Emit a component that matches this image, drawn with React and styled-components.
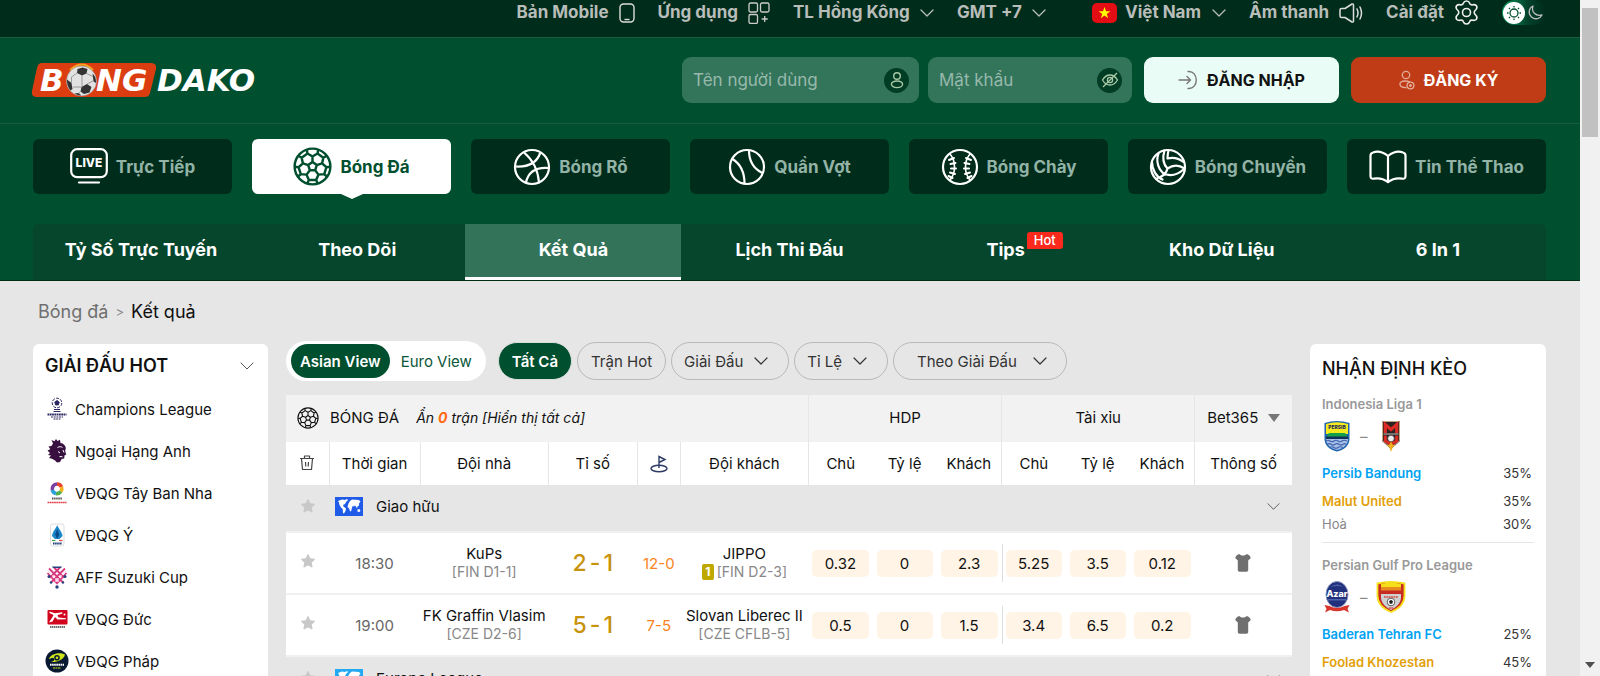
import React from 'react';
import styled, { createGlobalStyle, css } from 'styled-components';

const leagues = [
	{ name: 'Champions League', logo: 'ucl' },
	{ name: 'Ngoại Hạng Anh', logo: 'epl' },
	{ name: 'VĐQG Tây Ban Nha', logo: 'laliga' },
	{ name: 'VĐQG Ý', logo: 'seriea' },
	{ name: 'AFF Suzuki Cup', logo: 'aff' },
	{ name: 'VĐQG Đức', logo: 'bundesliga' },
	{ name: 'VĐQG Pháp', logo: 'ligue1' },
];

const sports = [
	{ name: 'Trực Tiếp', icon: 'live' },
	{ name: 'Bóng Đá', icon: 'football' },
	{ name: 'Bóng Rổ', icon: 'basketball' },
	{ name: 'Quần Vợt', icon: 'tennis' },
	{ name: 'Bóng Chày', icon: 'baseball' },
	{ name: 'Bóng Chuyền', icon: 'volleyball' },
	{ name: 'Tin Thể Thao', icon: 'book' },
];

const menus = ['Tỷ Số Trực Tuyến', 'Theo Dõi', 'Kết Quả', 'Lịch Thi Đấu', 'Tips', 'Kho Dữ Liệu', '6 In 1'];

const matches = [
	{
		time: '18:30',
		home: 'KuPs',
		homeRank: '[FIN D1-1]',
		score: [2, 1],
		corner: '12-0',
		away: 'JIPPO',
		awayRank: '[FIN D2-3]',
		awayCard: 1,
		odds: ['0.32', '0', '2.3', '5.25', '3.5', '0.12'],
	},
	{
		time: '19:00',
		home: 'FK Graffin Vlasim',
		homeRank: '[CZE D2-6]',
		score: [5, 1],
		corner: '7-5',
		away: 'Slovan Liberec II',
		awayRank: '[CZE CFLB-5]',
		odds: ['0.5', '0', '1.5', '3.4', '6.5', '0.2'],
	},
];

const predictions = [
	{
		league: 'Indonesia Liga 1',
		home: 'Persib Bandung',
		away: 'Malut United',
		logos: ['persib', 'malut'],
		rates: ['35%', '35%', '30%'],
	},
	{
		league: 'Persian Gulf Pro League',
		home: 'Baderan Tehran FC',
		away: 'Foolad Khozestan',
		logos: ['azar', 'foolad'],
		rates: ['25%', '45%', '30%'],
	},
];

/* seams of a football: centre pentagon, spokes and the outer pentagons */
const point = (r, deg) => {
	const a = (deg * Math.PI) / 180;
	return `${(12 + r * Math.cos(a)).toFixed(2)} ${(12 + r * Math.sin(a)).toFixed(2)}`;
};
const angles = [-90, -18, 54, 126, 198];
const seams =
	`M${angles.map(a => point(2.8, a)).join('L')}Z` +
	angles
		.map(
			a =>
				`M${point(2.8, a)}L${point(6.2, a)}` +
				`M${point(11, a - 19)}L${point(8.6, a - 21)}L${point(6.2, a)}L${point(8.6, a + 21)}L${point(11, a + 19)}` +
				`M${point(8.6, a + 21)}L${point(8.6, a + 51)}`,
		)
		.join('');

const Football = ({ size, width = 1.4 }) => (
	<svg width={size} height={size} viewBox="0 0 24 24" fill="none" stroke="currentColor" strokeWidth={width} strokeLinejoin="round">
		<circle cx="12" cy="12" r="11" />
		<path d={seams} />
	</svg>
);

const Chevron = ({ size = 14, width = 1.4 }) => (
	<svg width={size} height={size} viewBox="0 0 14 14" fill="none" stroke="currentColor" strokeWidth={width} strokeLinecap="round" strokeLinejoin="round">
		<path d="M1 4l6 6 6-6" />
	</svg>
);

const Star = () => (
	<svg width="16" height="16" viewBox="0 0 16 16" fill="#c8c8c8" stroke="#c8c8c8" strokeLinejoin="round">
		<path d="M8 1.500l2 4.200 4.600.6-3.400 3.200.9 4.600L8 11.900l-4.100 2.200.9-4.600L1.400 6.300 6 5.700z" />
	</svg>
);

const Shirt = () => (
	<svg width="16" height="20" viewBox="0 0 16 20" fill="#6f6f6f">
		<path d="M4.500 1C6 3 10 3 11.500 1c2 .3 3.700 1.800 4.300 4l-2.600 2.600V17c0 1-.8 1.700-1.700 1.700h-7c-1 0-1.700-.7-1.700-1.700V7.600L.2 5C.8 2.800 2.500 1.300 4.500 1z" />
	</svg>
);

const WorldFlag = ({ color }) => (
	<svg width="28" height="19" viewBox="0 0 28 19">
		<path fill={color} d="M0 0h28v19H0z" />
		<path
			fill="#fff"
			d="M3 4l4-1.500 3 .5 2-1 1 1-2 2-1 2-2 1 .5 1.500 2.500 2-.5 2.500-1.500 2.500-1-.5-.3-4L6 10.500 4.500 8 4 5.500zM13.500 6.500L15 4l2-1.500L24 3l1.500 1.500-1.500 2v2l-1.500 1-.5 2-1-2-1.500-1-.5 1.500-1-1.500-1 2-.8 3.500-1.200.5-.8-3-1.700-1.500zM22.500 12.500l2-.5 1 2-1.500 1.300-1.700-1z"
		/>
	</svg>
);

function SportIcon({ name }) {
	if (name === 'football') return <Football size={39} width={1.5} />;
	return (
		<svg width="38" height="38" viewBox="0 0 38 38" fill="none" stroke="#fff" strokeWidth="2.200" strokeLinejoin="round" strokeLinecap="round">
			{name === 'live' && (
				<>
					<rect x="1.200" y="1.200" width="35.600" height="28" rx="6" />
					<path d="M9 34.500h20" />
					<text x="19" y="19" textAnchor="middle" fill="#fff" stroke="none" fontSize="12" fontWeight="800">
						LIVE
					</text>
				</>
			)}
			{name === 'basketball' && (
				<>
					<circle cx="19" cy="19" r="17" />
					<path d="M11 4.500C20 12 25 22 26 34.500M3 18.500c10 .5 20-2 24-13M13 34.500C15 25 22 19 35.500 20" />
				</>
			)}
			{name === 'tennis' && (
				<>
					<circle cx="19" cy="19" r="17" />
					<path d="M21 2.500c0 9 3 17 12.500 22M4.500 11c8 5 12 14 12 24.500" />
				</>
			)}
			{name === 'baseball' && (
				<>
					<circle cx="19" cy="19" r="17" />
					<path d="M9 6c6 7 6 19 0 26M29 6c-6 7-6 19 0 26" strokeWidth="1.600" />
					<path d="M8 12l5-2M9.500 16l5-1M10 20.500h5M9 24.500l5 1.500M7.500 28l4 2M30 12l-5-2M28.500 16l-5-1M28 20.500h-5M29 24.500l-5 1.500M30.500 28l-4 2" strokeWidth="2" />
				</>
			)}
			{name === 'volleyball' && (
				<>
					<circle cx="19" cy="19" r="17" />
					<path d="M18.500 20.500C14 16 13.500 9 15.500 2.500M9.500 5.500c-3 8 0 16.500 6.500 21M3 14c0 8 4.500 15 10.500 17.500M18.500 20.500c6-4 11.500-3.500 17 0M18.500 10.500c6-1.500 11.500 0 16 3.500M18.500 20.500c-1 5-5.500 8.500-11.500 10M17.500 26.500c6 1.500 12.500-1 17-5M18.500 10.500c0-3 .3-5.500 1-8" />
				</>
			)}
			{name === 'book' && (
				<path d="M19 8C14 4 8 3 4 4.500c-1.500.5-2.500 1-2.500 3V28c0 2 1 3 3 2.700 5-1 10 0 14.500 3.300 4.500-3.300 9.500-4.300 14.500-3.300 2 .3 3-.7 3-2.700V7.500c0-2-1-2.500-2.500-3C30 3 24 4 19 8zM19 8v26" />
			)}
		</svg>
	);
}

function LeagueLogo({ name }) {
	return (
		<svg width="24" height="24" viewBox="0 0 24 24">
			{name === 'ucl' && (
				<g fill="none" stroke="#2a2760">
					<circle cx="12" cy="6" r="4.800" strokeDasharray="3 1.200" />
					<path d="M12 3.500l2.200 1.700-.8 2.700h-2.800l-.8-2.700z" fill="#2a2760" />
					<path d="M9 12.500h6M8.500 14.500h7" />
					<path d="M2.500 17.500h19" strokeWidth="2" strokeDasharray="1.800 .5" />
					<path d="M6 20h12M8.500 22h7" strokeDasharray="2 .7" />
				</g>
			)}
			{name === 'epl' && (
				<>
					<path
						fill="#38103f"
						d="M8 4.500L6.500 1l3 1.200L11 0l1.500 2L15 .8 15.500 4c3 .3 5 2.500 5.300 5l-.6 3 1 3.500-1.700 1-.3 3-2.500.5-1.700 3-3 .5c-2-2.500-5-4-8-4.500L6 16.500 3 16l2-2-2.500-2.500 2.800-1.200L3.500 7.500l3-.5z"
					/>
					<path fill="none" stroke="#fff" strokeWidth="1" d="M12.500 8.500c2-1.200 3.500-1 5 0M13 12.500l2 1.500M18 11l1 2.500M14.500 17.500l3 .3" />
				</>
			)}
			{name === 'laliga' && (
				<>
					<g fill="none" strokeWidth="3.600">
						<path stroke="#e8442c" d="M12 3a5 5 0 0 1 4.500 3" />
						<path stroke="#f6b21a" d="M16.600 6a5 5 0 0 1-.8 4.500" />
						<path stroke="#4cae4c" d="M15.800 10.500A5 5 0 0 1 11 12.600" />
						<path stroke="#2c9fdc" d="M11 12.600A5 5 0 0 1 7.300 9" />
						<path stroke="#7b3fa0" d="M7.300 9A5 5 0 0 1 12 3" />
					</g>
					<path stroke="#555" strokeWidth="2" strokeDasharray="1.500 .6" d="M7 17.500h10" />
					<path stroke="#e1454a" strokeWidth="1.600" strokeDasharray="1.800 .4" d="M2.500 21.500h19" />
				</>
			)}
			{name === 'seriea' && (
				<>
					<rect x="5.500" y="1" width="13.500" height="22" rx="2.500" fill="#fff" stroke="#ddd" />
					<path fill="#1d87c9" d="M12.200 2c1 3 5.300 7.500 5.300 11L14.500 16h-4.600L7 13c0-3.500 4.200-8 5.200-11z" />
					<path fill="#0b4a87" d="M12.200 6l2 5.500-2 4.500-2-4.500z" />
					<path stroke="#3aa14f" strokeWidth="1.200" d="M7 17.500h3.500" />
					<path stroke="#d94343" strokeWidth="1.200" d="M14 17.500h3.500" />
					<path stroke="#1c3e7a" strokeWidth="2" strokeDasharray="1.600 .5" d="M8 20.500h9" />
				</>
			)}
			{name === 'aff' && (
				<>
					<path fill="none" stroke="#d8387f" strokeWidth="1.800" d="M4 3.500l14 14M20 3.500l-14 14M9 2.500l10 10M15 2.500l-10 10M2.500 8l10 11M21.500 8l-10 11" />
					<path fill="none" stroke="#f9cfe0" strokeWidth=".7" d="M3 6l12 12M21 6L9 18" />
					<g fill="#28417e">
						<circle cx="4" cy="11.500" r="1.500" />
						<circle cx="20" cy="11.500" r="1.500" />
						<path d="M7 1.500h10l-1 1.500H8z" />
						<circle cx="12" cy="22" r="1.700" />
						<circle cx="6" cy="17.500" r="1.200" />
						<circle cx="18" cy="17.500" r="1.200" />
					</g>
				</>
			)}
			{name === 'bundesliga' && (
				<>
					<rect x="2.500" y="3" width="20" height="14.500" rx="1" fill="#d2051e" />
					<path fill="#fff" d="M4.500 4.500l5.500 1.700 7.500-1-.3 1.500-4.700 1.300 1 2.500 7.500.8v1l-8.500.2L10 10l-2.500 4.500-3.500 1 3.500-5.500 1-2-4-2z" />
					<circle cx="19.500" cy="7.500" r="1" fill="#fff" />
					<path stroke="#444" strokeWidth="1.500" strokeDasharray="1.500 .5" d="M5 20h15" />
				</>
			)}
			{name === 'ligue1' && (
				<>
					<circle cx="12" cy="12" r="11.500" fill="#0a1932" />
					<path fill="#cde31b" d="M4 10c1-5 10-7.500 16-4.500-1 5-8 8-14 7.500 3-1 4-2 3-3.500-1-1-3 0-5 .5z" />
					<circle cx="12" cy="8.800" r="2.800" fill="#0a1932" />
					<circle cx="12" cy="8.800" r="1.300" fill="#cde31b" />
					<path stroke="#fff" strokeWidth="2" strokeDasharray="1.600 .5" d="M5 15.700h14" />
					<path stroke="#cde31b" strokeWidth="1.200" strokeDasharray="2 .5" d="M8 19h8" />
				</>
			)}
		</svg>
	);
}

function TeamLogo({ name }) {
	return (
		<svg width="30" height="32" viewBox="0 0 30 32">
			{name === 'persib' && (
				<>
					<path fill="#1f63ae" d="M2.500 3Q15-1 27.500 3v16c0 6-5 11-12.500 12.500C7.500 30 2.500 25 2.500 19z" />
					<path fill="#f4ea1d" d="M4 4q11-3.500 22 0v10H4z" />
					<path fill="#17a04a" d="M4 17l3-4h16l3 4z" />
					<path fill="#12305c" d="M4 16.500h22v2.500H4z" />
					<path fill="#a9bfe6" d="M4 19h22c0 5-4 9.500-11 11C8 28.500 4 24 4 19z" />
					<path fill="none" stroke="#3f63b0" strokeWidth="1.200" d="M4 21q2-1.500 4 0t4 0 4 0 4 0 5 0M5 24.300q2-1.500 4 0t4 0 4 0 4 0 3 0M8 27.500q2-1.500 4 0t4 0 5 0" />
					<text x="15" y="8.500" textAnchor="middle" fontSize="5" fontWeight="800" fill="#1b2a5e">
						PERSIB
					</text>
				</>
			)}
			{name === 'malut' && (
				<>
					<path fill="#2a2220" d="M6 1h18v20l-9 8-9-8z" />
					<path fill="none" stroke="#e9c9a0" strokeWidth=".8" d="M6.500 1.500h17v19L15 28l-8.500-7.500z" />
					<path fill="none" stroke="#dc2a25" strokeWidth="3.200" d="M9.300 13V4.500l5.700 5 5.700-5V13" />
					<path fill="none" stroke="#eee" strokeWidth=".8" d="M7.500 14h15" />
					<path fill="none" stroke="#dc2a25" strokeWidth="3" d="M9.300 15.500v5.500L15 24l5.700-3v-5.500" />
					<circle cx="15" cy="18.500" r="3.300" fill="#eee" stroke="#333" strokeWidth=".7" />
					<path fill="#f0b020" d="M15 21l1.300 3.500 3.200.5-2.700 2-1.800 5-1.800-5-2.700-2 3.200-.5z" />
				</>
			)}
			{name === 'azar' && (
				<>
					<ellipse cx="15" cy="13.500" rx="11" ry="13" fill="#20307c" stroke="#8b94bd" />
					<path fill="#4e62ab" d="M8 6q7-5 14 0-7-2-14 0zM6 18h18v1.500H6z" />
					<path fill="#d8352c" d="M2.500 24l5 1q7.500 4 15 0l5-1-2 4 1.500 3.500L22 29q-7 2.500-14 0l-5 2.500L4.500 28z" />
					<text x="15" y="15.500" textAnchor="middle" fontSize="9" fontWeight="800" fill="#fff">
						Azar
					</text>
				</>
			)}
			{name === 'foolad' && (
				<>
					<path fill="#c62a22" stroke="#f5df1b" strokeWidth="1.800" d="M1.500 2.500Q15-.5 28.500 2.500v12c0 8-5 13-13.500 16.500C6.500 27.500 1.500 22.500 1.500 14.500z" />
					<path fill="#f5df1b" d="M5 3Q15 .5 25 3v4H5z" />
					<path fill="#e98a20" d="M5 6h20v3.500H5z" />
					<path fill="#cfd0d2" d="M5 13h20v3c0 6-4.500 10-10 13-5.500-3-10-7-10-13z" />
					<path stroke="#d8453c" strokeWidth="1.500" strokeDasharray="1.800 .6" d="M8 16h14M13 27h4" />
					<circle cx="15" cy="21" r="3.800" fill="#fff" stroke="#222" strokeWidth=".7" />
					<path fill="#222" d="M15 18.800l2 1.500-.8 2.400h-2.400l-.8-2.400z" />
				</>
			)}
		</svg>
	);
}

const Logo = () => (
	<LogoSvg width="224" height="36" viewBox="0 0 224 36" role="img" aria-label="BongDaKo">
		<path fill="#dc3d10" d="M10 1h109q6 0 5 6l-6 24q-1 4-5 4H5q-6 0-5-6L5 6q1-5 5-5z" />
		<g fill="#fff" fontFamily="'DejaVu Sans', sans-serif" fontSize="31" fontWeight="700" fontStyle="italic">
			<text x="8" y="29">B</text>
			<text x="64" y="29">NG</text>
			<text x="125" y="29">DAKO</text>
		</g>
		<path fill="none" stroke="#f2a51c" strokeWidth="2" d="M38 8q12-11 23 0" />
		<circle cx="49.500" cy="19" r="15" fill="#e2e2e2" stroke="#999" strokeWidth=".6" />
		<path fill="#333" d="M45.500 7l5-1.500 5 1.500-1 4.500-4.500 2-5-2.500zM35 17.500l4.500 3.500 1 6-2 1.500q-4-5-3.500-11zM49.500 25l5.500-3 4.500 3-2 5.500-5.500 1.500-3.500-2.500zM60.500 11.500q4 4 3.500 9.500l-2.500-1.500zM42.500 31.500l4-.5 3 2.500q-4 0-7-2z" />
		<path fill="none" stroke="#888" strokeWidth=".8" d="M45 11l-5.500 4v6M50 13.500v11.500M41 25l8.500 0M54.500 11.500l6.500 3M55 22l6-3M48.500 29.500l-2 2" />
	</LogoSvg>
);

const TopSelect = ({ label, children }) => (
	<TopItem as="label">
		<PlainSelect aria-label={label}>
			<option>{children}</option>
		</PlainSelect>
		<Chevron size={14} width={1.3} />
	</TopItem>
);

function TopBar() {
	return (
		<Top>
			<TopGroup>
				<TopItem>
					Bản Mobile
					<svg width="16" height="20" viewBox="0 0 16 20" fill="none" stroke="#ddd" strokeWidth="1.400">
						<rect x="1" y="1" width="14" height="18" rx="3.500" />
						<path d="M5.500 16.500h5" />
					</svg>
				</TopItem>
				<TopItem>
					Ứng dụng
					<svg width="22" height="22" viewBox="0 0 22 22" fill="none" stroke="#ccc" strokeWidth="1.300">
						<rect x="1" y="1" width="8.500" height="9" rx="1.500" />
						<rect x="12.500" y="1" width="8.500" height="9" rx="1.500" />
						<rect x="1" y="12.500" width="8.500" height="9" rx="1.500" />
						<path d="M16.700 14v6M13.700 17h6" />
					</svg>
				</TopItem>
				<TopSelect label="Loại tỷ lệ">TL Hồng Kông</TopSelect>
				<TopSelect label="Múi giờ">GMT +7</TopSelect>
			</TopGroup>
			<TopGroup>
				<TopLanguage>
					<svg width="25" height="20" viewBox="0 0 25 20">
						<rect width="25" height="20" rx="5" fill="#e30d13" />
						<path fill="#ff0" d="M12.500 4l1.500 4.200h4.400l-3.600 2.700 1.400 4.300-3.700-2.600-3.700 2.600 1.400-4.300L6.600 8.200H11z" />
					</svg>
					<TopSelect label="Ngôn ngữ">Việt Nam</TopSelect>
				</TopLanguage>
				<TopItem>
					Âm thanh
					<svg width="24" height="20" viewBox="0 0 24 20" fill="none" stroke="#ddd" strokeWidth="1.500" strokeLinejoin="round" strokeLinecap="round">
						<path d="M2.500 5.500H6L13 1q1.500-.5 1.500 1v16q0 1.500-1.500 1L6 14.500H2.500Q1 14.500 1 13V7q0-1.500 1.500-1.500zM18 6q2 4 0 8M21 4q3 6 0 12" />
					</svg>
				</TopItem>
				<TopItem>
					Cài đặt
					<svg width="25" height="25" viewBox="0 0 25 25" fill="none" stroke="#eee" strokeWidth="1.600" strokeLinejoin="round">
						<path d="M9.500 3q.6-2 3-2t3 2q.5 1.900 2.300 1.900 3-.8 4.500.6 1.400 2.300-.3 4-1.800 1.700-1.800 3t1.800 3q1.700 1.700.3 4-1.500 1.400-4.500.6-1.800 0-2.300 1.900-.6 2-3 2t-3-2q-.5-1.900-2.300-1.900-3 .8-4.500-.6-1.400-2.300.3-4 1.800-1.700 1.800-3t-1.800-3q-1.700-1.700-.3-4 1.500-1.400 4.500-.6 1.800 0 2.300-1.900z" />
						<circle cx="12.500" cy="12.500" r="4" />
					</svg>
				</TopItem>
				<ThemeSwitch>
					<input type="checkbox" role="switch" aria-label="Chế độ tối" />
					<Knob>
						<svg width="16" height="16" viewBox="0 0 16 16" fill="none" stroke="#00502f" strokeWidth="1.300">
							<circle cx="8" cy="8" r="4" />
							<path d="M8 1v1.500M8 13.500V15M1 8h1.500M13.500 8H15M3 3l1 1M12 12l1 1M3 13l1-1M12 4l1-1" />
						</svg>
					</Knob>
					<svg width="15" height="15" viewBox="0 0 15 15" fill="none" stroke="#bbb" strokeWidth="1.300" strokeLinejoin="round">
						<path d="M5 1C.5 3 0 9 3.500 12s8.500 2 10.500-2C7.500 11.500 3 7 5 1z" />
					</svg>
				</ThemeSwitch>
			</TopGroup>
		</Top>
	);
}

function Header() {
	return (
		<HeaderBar>
			<a href="#home">
				<Logo />
			</a>
			<LoginForm onSubmit={e => e.preventDefault()}>
				<Fields>
					<Field basis={237}>
						<input type="text" placeholder="Tên người dùng" aria-label="Tên người dùng" />
						<FieldIcon>
							<svg width="14" height="18" viewBox="0 0 14 18" fill="none" stroke="#a9c8a6" strokeWidth="1.400">
								<circle cx="7" cy="5" r="3.300" />
								<ellipse cx="7" cy="13.300" rx="5.600" ry="3.300" />
							</svg>
						</FieldIcon>
					</Field>
					<Field basis={204}>
						<input type="password" placeholder="Mật khẩu" aria-label="Mật khẩu" />
						<FieldIcon>
							<svg width="18" height="18" viewBox="0 0 18 18" fill="none" stroke="#a9c8a6" strokeWidth="1.300">
								<path d="M1.500 9q3-5 7.500-5t7.500 5q-3 5-7.500 5T1.500 9zM16 2L2 16" />
								<circle cx="9" cy="9" r="2.600" />
							</svg>
						</FieldIcon>
					</Field>
				</Fields>
				<AuthButton type="submit">
					<svg width="20" height="20" viewBox="0 0 20 20" fill="none" stroke="#777" strokeWidth="1.400" strokeLinecap="round" strokeLinejoin="round">
						<path d="M1 10h11M9 6.500l3.500 3.500L9 13.500M10 1.500c11-1 11 18 0 17" />
					</svg>
					ĐĂNG NHẬP
				</AuthButton>
				<AuthButton type="button" primary="true">
					<svg width="16" height="20" viewBox="0 0 16 20" fill="none" stroke="#e3ac9a" strokeWidth="1.300">
						<circle cx="7" cy="5" r="3.700" />
						<path d="M7.500 17.500C-1 18-1 11 6 11q3 0 5 1" />
						<circle cx="11.500" cy="15.500" r="3.400" />
						<path d="M10 15.500h3M11.500 14v3" />
					</svg>
					ĐĂNG KÝ
				</AuthButton>
			</LoginForm>
		</HeaderBar>
	);
}

function HotLeagues() {
	return (
		<Card>
			<CardTitle>
				GIẢI ĐẤU HOT
				<IconButton aria-label="Thu gọn">
					<Chevron size={14} width={1} />
				</IconButton>
			</CardTitle>
			<ul>
				{leagues.map(league => (
					<League key={league.logo}>
						<a href={`#${league.logo}`}>
							<LeagueLogo name={league.logo} />
							{league.name}
						</a>
					</League>
				))}
			</ul>
		</Card>
	);
}

function Filters() {
	return (
		<FilterBar>
			<ViewToggle>
				<ViewButton active="true">Asian View</ViewButton>
				<ViewButton>Euro View</ViewButton>
			</ViewToggle>
			<FilterGroup>
				<Pill active="true">Tất Cả</Pill>
				<Pill>Trận Hot</Pill>
				<Pill wide="true">
					Giải Đấu <Chevron size={14} width={1.2} />
				</Pill>
				<Pill wide="true">
					Tỉ Lệ <Chevron size={14} width={1.2} />
				</Pill>
				<PillSelect>
					<PlainSelect aria-label="Sắp xếp">
						<option>Theo Giải Đấu</option>
					</PlainSelect>
					<Chevron size={14} width={1.2} />
				</PillSelect>
			</FilterGroup>
		</FilterBar>
	);
}

const LeagueHead = ({ name, color }) => (
	<LeagueRow>
		<StarCell>
			<IconButton aria-label="Theo dõi giải">
				<Star />
			</IconButton>
		</StarCell>
		<td colSpan={12}>
			<LeagueName>
				<WorldFlag color={color} />
				<span>{name}</span>
				<IconButton aria-label="Thu gọn giải">
					<Chevron size={13} width={1} />
				</IconButton>
			</LeagueName>
		</td>
	</LeagueRow>
);

function ResultTable() {
	return (
		<Table>
			<colgroup>
				{[43, 91, 128, 89, 43, 128, 64, 64, 65, 64, 64, 65, 97].map((w, i) => (
					<col key={i} width={w} />
				))}
			</colgroup>
			<thead>
				<GroupRow>
					<th colSpan={6}>
						<SportTitle>
							<Football size={22} width={1.2} />
							<span>BÓNG ĐÁ</span>
							<em>
								Ẩn <b>0</b> trận <a href="#all">[Hiển thị tất cả]</a>
							</em>
						</SportTitle>
					</th>
					<th colSpan={3}>HDP</th>
					<th colSpan={3}>Tài xỉu</th>
					<th>
						<Bookmaker>
							<PlainSelect aria-label="Nhà cái">
								<option>Bet365</option>
							</PlainSelect>
							<svg width="12" height="8" viewBox="0 0 12 8" fill="#777">
								<path d="M0 0h12L6 8z" />
							</svg>
						</Bookmaker>
					</th>
				</GroupRow>
				<HeadRow>
					<th>
						<IconButton aria-label="Xóa">
							<svg width="16" height="18" viewBox="0 0 16 18" fill="none" stroke="#444" strokeWidth="1.200" strokeLinejoin="round">
								<path d="M1 3.500h14M5.500 3.500V1h5v2.500M2.500 3.500l1 11h9l1-11M6.500 7l.3 4.500M9.500 7l-.3 4.500" />
							</svg>
						</IconButton>
					</th>
					<th>Thời gian</th>
					<th>Đội nhà</th>
					<th>Tỉ số</th>
					<th>
						<svg width="18" height="18" viewBox="0 0 18 18" fill="none" stroke="#2d3a66" strokeWidth="1.400" aria-label="Phạt góc">
							<path d="M9 13V1.500l6 3-6 3" />
							<ellipse cx="9" cy="13.500" rx="8" ry="3.200" />
						</svg>
					</th>
					<th>Đội khách</th>
					<OddHead>Chủ</OddHead>
					<OddHead>Tỷ lệ</OddHead>
					<OddHead>Khách</OddHead>
					<OddHead>Chủ</OddHead>
					<OddHead>Tỷ lệ</OddHead>
					<OddHead>Khách</OddHead>
					<th>Thông số</th>
				</HeadRow>
			</thead>
			<tbody>
				<LeagueHead name="Giao hữu" color="#1f5ae8" />
				{matches.map(match => (
					<MatchRow key={match.time}>
						<StarCell>
							<IconButton aria-label="Theo dõi trận">
								<Star />
							</IconButton>
						</StarCell>
						<Time>{match.time}</Time>
						<Team>
							{match.home}
							<span>{match.homeRank}</span>
						</Team>
						<td>
							<Score>
								<span>{match.score[0]}</span>
								<span>-</span>
								<span>{match.score[1]}</span>
							</Score>
						</td>
						<Corner>{match.corner}</Corner>
						<Team>
							{match.away}
							<span>
								{match.awayCard && <RankCard>{match.awayCard}</RankCard>}
								{match.awayRank}
							</span>
						</Team>
						{match.odds.map((odd, i) => (
							<td key={i}>
								<OddBox divider={i === 3 ? 'true' : undefined}>
									<Odd>{odd}</Odd>
								</OddBox>
							</td>
						))}
						<td>
							<IconButton aria-label="Đội hình">
								<Shirt />
							</IconButton>
						</td>
					</MatchRow>
				))}
				<LeagueHead name="Europa League" color="#23a9f2" />
			</tbody>
		</Table>
	);
}

function Predictions() {
	return (
		<Card>
			<CardTitle large="true">NHẬN ĐỊNH KÈO</CardTitle>
			{predictions.map(item => (
				<Prediction key={item.league}>
					<h3>{item.league}</h3>
					<Versus>
						<TeamLogo name={item.logos[0]} />
						<span>–</span>
						<TeamLogo name={item.logos[1]} />
					</Versus>
					<Rate color="#00a2f2">
						<a href="#home-team">{item.home}</a>
						<span>{item.rates[0]}</span>
					</Rate>
					<Rate color="#e3a008">
						<a href="#away-team">{item.away}</a>
						<span>{item.rates[1]}</span>
					</Rate>
					<DrawRate>
						Hoà
						<span>{item.rates[2]}</span>
					</DrawRate>
				</Prediction>
			))}
		</Card>
	);
}

export default function App() {
	return (
		<>
			<GlobalStyle />
			<Shell>
				<Page>
					<TopBar />
					<Header />
					<NavArea>
						<SportNav>
							{sports.map((sport, i) => (
								<SportLink key={sport.name} href={`#${sport.icon}`} active={i === 1 ? 'true' : undefined}>
									<SportIcon name={sport.icon} />
									{sport.name}
								</SportLink>
							))}
						</SportNav>
						<SubNav>
							{menus.map((menu, i) => (
								<SubLink key={menu} href={`#menu-${i}`} active={i === 2 ? 'true' : undefined}>
									<span>
										{menu}
										{menu === 'Tips' && <HotBadge>Hot</HotBadge>}
									</span>
								</SubLink>
							))}
						</SubNav>
					</NavArea>
					<Breadcrumb aria-label="Breadcrumb">
						<a href="#football">Bóng đá</a>
						<small>&gt;</small>
						<span>Kết quả</span>
					</Breadcrumb>
					<Content>
						<HotLeagues />
						<Center>
							<Filters />
							<ResultTable />
						</Center>
						<Predictions />
					</Content>
				</Page>
				<Scrollbar aria-hidden="true">
					<Thumb />
					<svg width="10" height="6" viewBox="0 0 10 6" fill="#505050">
						<path d="M0 0h10L5 6z" />
					</svg>
				</Scrollbar>
			</Shell>
		</>
	);
}

const GlobalStyle = createGlobalStyle`
	* {
		box-sizing: border-box;
	}
	body {
		margin: 0;
		background: #e6e6e6;
		color: #111;
		font-family: Inter, 'Liberation Sans', sans-serif;
		font-size: 15px;
	}
	button, input, select {
		font: inherit;
		color: inherit;
	}
	button {
		cursor: pointer;
	}
	a {
		color: inherit;
		text-decoration: none;
	}
	ul {
		margin: 1px 0 0;
		padding: 0;
		list-style: none;
	}
	svg {
		display: block;
		flex: none;
	}
`;

const Shell = styled.div`
	display: flex;
	height: 100vh;
	overflow: hidden;
`;

const Page = styled.div`
	flex: 1;
	min-width: 0;
	overflow: hidden;
`;

const Scrollbar = styled.div`
	display: flex;
	flex-direction: column;
	align-items: center;
	justify-content: space-between;
	width: 20px;
	padding: 8px 0;
	background: #f1f1f1;
`;

const Thumb = styled.div`
	width: 16px;
	height: 129px;
	background: #c1c1c1;
`;

const PlainSelect = styled.select`
	appearance: none;
	padding: 0;
	border: 0;
	background: none;
	outline: none;
`;

const IconButton = styled.button`
	display: inline-flex;
	padding: 0;
	border: 0;
	background: none;
	color: #555;
`;

const Top = styled.div`
	display: flex;
	justify-content: flex-end;
	gap: 46px;
	padding: 0 34px 12px;
	background: #002c1c;
	color: #b9bdb9;
	font-size: 17px;
	font-weight: 700;
	line-height: 25px;
`;

const TopGroup = styled.div`
	display: flex;
	align-items: center;
	gap: 23px;
`;

const TopItem = styled.button`
	display: flex;
	align-items: center;
	gap: 10px;
	padding: 0;
	border: 0;
	background: none;
`;

const TopLanguage = styled.div`
	display: flex;
	align-items: center;
	gap: 8px;
`;

const ThemeSwitch = styled.label`
	display: flex;
	align-items: center;
	justify-content: space-between;
	width: 44px;
	height: 25px;
	padding: 0 3px 0 1px;
	border-radius: 13px;
	background: linear-gradient(90deg, #0a9a5d, #00402a 60%, #002c1c);

	input {
		position: absolute;
		opacity: 0;
	}
`;

const Knob = styled.span`
	display: grid;
	place-items: center;
	width: 22px;
	height: 22px;
	border-radius: 50%;
	background: #fff;
`;

const HeaderBar = styled.header`
	display: flex;
	align-items: center;
	justify-content: space-between;
	padding: 19px 34px 20px 32px;
	border: solid #1a5b42;
	border-width: 1px 0;
	background: #004f2f;
`;

const LogoSvg = styled.svg`
	overflow: visible;
`;

const LoginForm = styled.form`
	display: flex;
	gap: 12px;
`;

const Fields = styled.div`
	display: flex;
	gap: 9px;
`;

const Field = styled.label`
	display: flex;
	align-items: center;
	width: ${props => props.basis}px;
	height: 46px;
	padding: 0 10px 0 11px;
	border-radius: 9px;
	background: #33755a;

	input {
		flex: 1;
		min-width: 0;
		padding: 0;
		border: 0;
		background: none;
		outline: none;
		font-size: 17px;
	}
	input::placeholder {
		color: #98b9ac;
	}
`;

const FieldIcon = styled.span`
	display: grid;
	place-items: center;
	width: 25px;
	height: 25px;
	border-radius: 50%;
	background: #003d24;
`;

const AuthButton = styled.button`
	display: flex;
	align-items: center;
	justify-content: center;
	gap: 9px;
	width: 195px;
	height: 46px;
	border: 0;
	border-radius: 9px;
	background: ${props => (props.primary ? '#bf3c16' : '#e9fcf5')};
	color: ${props => (props.primary ? '#fff' : '#111')};
	font-size: 16px;
	font-weight: 700;
`;

const NavArea = styled.div`
	padding: 15px 34px 0 33px;
	border-bottom: 1px solid #002e12;
	background: #004f2f;
`;

const SportNav = styled.nav`
	display: grid;
	grid-template-columns: repeat(7, 1fr);
	gap: 20px;
`;

const SportLink = styled.a`
	position: relative;
	display: flex;
	align-items: center;
	justify-content: center;
	gap: 8px;
	height: 55px;
	border-radius: 6px;
	background: #002c1c;
	color: #93b3a6;
	font-size: 17px;
	font-weight: 700;
	white-space: nowrap;

	${props =>
		props.active &&
		css`
			background: #fff;
			color: #004f2f;

			&::after {
				content: '';
				position: absolute;
				top: 100%;
				left: 50%;
				margin-left: -11px;
				border: solid transparent;
				border-width: 5px 11px 0;
				border-top-color: #fff;
			}
		`}
`;

const SubNav = styled.nav`
	display: grid;
	grid-template-columns: repeat(7, 1fr);
	margin-top: 30px;
	border-radius: 6px 6px 0 0;
	background: #05462c;
	overflow: hidden;
`;

const SubLink = styled.a`
	display: grid;
	place-items: center;
	height: 56px;
	padding-bottom: 2px;
	border-bottom: 3px solid ${props => (props.active ? '#fff' : 'transparent')};
	background: ${props => (props.active ? '#33735a' : 'none')};
	color: #fff;
	font-size: 18px;
	font-weight: 700;
	white-space: nowrap;

	span {
		position: relative;
	}
`;

const HotBadge = styled.b`
	position: absolute;
	top: -7px;
	left: 100%;
	margin-left: 2px;
	padding: 0 7px;
	border-radius: 3px 3px 3px 0;
	background: #fb2a1c;
	font-size: 13px;
	font-weight: 500;
	line-height: 17px;
`;

const Breadcrumb = styled.nav`
	display: flex;
	align-items: center;
	gap: 7px;
	padding: 2px 38px 0;
	font-size: 18px;
	line-height: 58px;

	a {
		color: #6f6f6f;
	}
	small {
		color: #888;
		font-size: 13px;
	}
`;

const Content = styled.main`
	display: grid;
	grid-template-columns: 235px minmax(0, 1fr) 236px;
	gap: 18px;
	padding: 0 34px 0 33px;
`;

const Card = styled.section`
	margin-top: 3px;
	padding: 0 12px;
	border-radius: 6px 6px 0 0;
	background: #fff;
`;

const CardTitle = styled.h2`
	display: flex;
	align-items: center;
	justify-content: space-between;
	margin: 0;
	padding-right: 2px;
	font-size: 18px;
	font-weight: ${props => (props.large ? 500 : 600)};
	line-height: ${props => (props.large ? 49 : 43)}px;
`;

const League = styled.li`
	a {
		display: flex;
		align-items: center;
		gap: 6px;
		height: 42px;
	}
`;

const Center = styled.div`
	min-width: 0;
`;

const FilterBar = styled.div`
	display: flex;
	align-items: center;
	gap: 12px;
	margin-bottom: 14px;
`;

const FilterGroup = styled.div`
	display: flex;
	gap: 5px;
`;

const ViewToggle = styled.div`
	display: flex;
	align-items: center;
	gap: 2px;
	height: 40px;
	padding: 0 5px;
	border-radius: 20px;
	background: #fff;
`;

const ViewButton = styled.button`
	height: 34px;
	padding: 0 9px;
	border: 0;
	border-radius: 17px;
	background: ${props => (props.active ? '#004f2f' : 'none')};
	color: ${props => (props.active ? '#fff' : '#0a5638')};
	font-weight: ${props => (props.active ? 600 : 400)};
`;

const Pill = styled.button`
	display: flex;
	align-items: center;
	gap: 11px;
	height: 38px;
	padding: 0 ${props => (props.wide ? 20 : 13)}px 0 ${props => (props.wide ? 12 : 13)}px;
	border: 1px solid ${props => (props.active ? '#d9dedb' : '#b9b9b9')};
	border-radius: 19px;
	background: ${props => (props.active ? '#004f2f' : 'none')};
	color: ${props => (props.active ? '#fff' : '#333')};
	font-weight: ${props => (props.active ? 600 : 400)};
`;

const PillSelect = styled.label`
	display: flex;
	align-items: center;
	gap: 16px;
	height: 38px;
	padding: 0 19px 0 23px;
	border: 1px solid #b9b9b9;
	border-radius: 19px;
	color: #333;
`;

const Table = styled.table`
	width: 100%;
	table-layout: fixed;
	border-collapse: collapse;

	th,
	td {
		padding: 0;
		font-weight: 400;
		text-align: center;
		vertical-align: middle;
	}
	td > svg,
	th > svg {
		margin: 0 auto;
	}
	td > button,
	th > button {
		vertical-align: middle;
	}
`;

const GroupRow = styled.tr`
	height: 47px;
	background: #f2f2f2;

	th {
		padding-bottom: 2px;
	}
	th + th {
		border-left: 1px solid #e6e6e6;
	}
`;

const SportTitle = styled.div`
	display: flex;
	align-items: center;
	gap: 11px;
	padding-left: 11px;

	em {
		margin-left: 6px;
		font-size: 14px;
	}
	b {
		color: #ff6a13;
	}
`;

const Bookmaker = styled.label`
	display: flex;
	align-items: center;
	justify-content: center;
	gap: 9px;
`;

const HeadRow = styled.tr`
	height: 43px;
	background: #fff;

	th + th {
		border-left: 1px solid #e6e6e6;
	}
`;

const OddHead = styled.th`
	&& {
		border-left-width: ${props => (props.children === 'Chủ' ? 1 : 0)}px;
	}
`;

const StarCell = styled.td`
	button {
		padding-bottom: 4px;
	}
`;

const LeagueRow = styled.tr`
	height: 47px;
	border-bottom: 2px solid #f0f0f0;
`;

const LeagueName = styled.div`
	display: flex;
	align-items: center;
	gap: 13px;
	padding: 0 12px 3px 6px;

	button {
		margin-left: auto;
	}
`;

const MatchRow = styled.tr`
	height: 62px;
	border-bottom: 2px solid #f0f0f0;
	background: #fff;
`;

const Time = styled.td`
	color: #666;
`;

const Team = styled.td`
	line-height: 18px;
	white-space: nowrap;

	span {
		display: flex;
		justify-content: center;
		gap: 3px;
		color: #888;
		font-size: 14px;
	}
`;

const RankCard = styled.b`
	width: 12px;
	height: 16px;
	margin-top: 1px;
	border-radius: 2px;
	background: #bfa800;
	color: #fff;
	font-size: 12px;
	line-height: 16px;
`;

const Score = styled.div`
	display: flex;
	justify-content: center;
	gap: 3px;
	color: #c8920c;
	font-size: 23px;
	font-weight: 500;
`;

const Corner = styled.td`
	color: #fb8320;
`;

const OddBox = styled.div`
	display: grid;
	align-items: center;
	height: 38px;
	padding: 0 4px 0 ${props => (props.divider ? 3 : 4)}px;
	border-left: ${props => (props.divider ? '1px solid #ddd' : 0)};
`;

const Odd = styled.span`
	border-radius: 5px;
	background: #fff4e5;
	line-height: 27px;
`;

const Prediction = styled.article`
	padding-bottom: 9px;
	margin-bottom: 11px;
	border-bottom: 1px solid #e6e6e6;

	h3 {
		margin: 0;
		color: #999;
		font-size: 13px;
		font-weight: 600;
		line-height: 22px;
	}
`;

const Versus = styled.div`
	display: flex;
	align-items: center;
	gap: 8px;
	margin: 5px 0 7px;
	color: #888;
`;

const Rate = styled.div`
	display: flex;
	justify-content: space-between;
	padding-right: 2px;
	line-height: 28px;

	a {
		color: ${props => props.color};
		font-size: 13px;
		font-weight: 600;
	}
	span {
		color: #333;
		font-size: 13px;
	}
`;

const DrawRate = styled(Rate)`
	color: #888;
	font-size: 13px;
	line-height: 18px;
`;
